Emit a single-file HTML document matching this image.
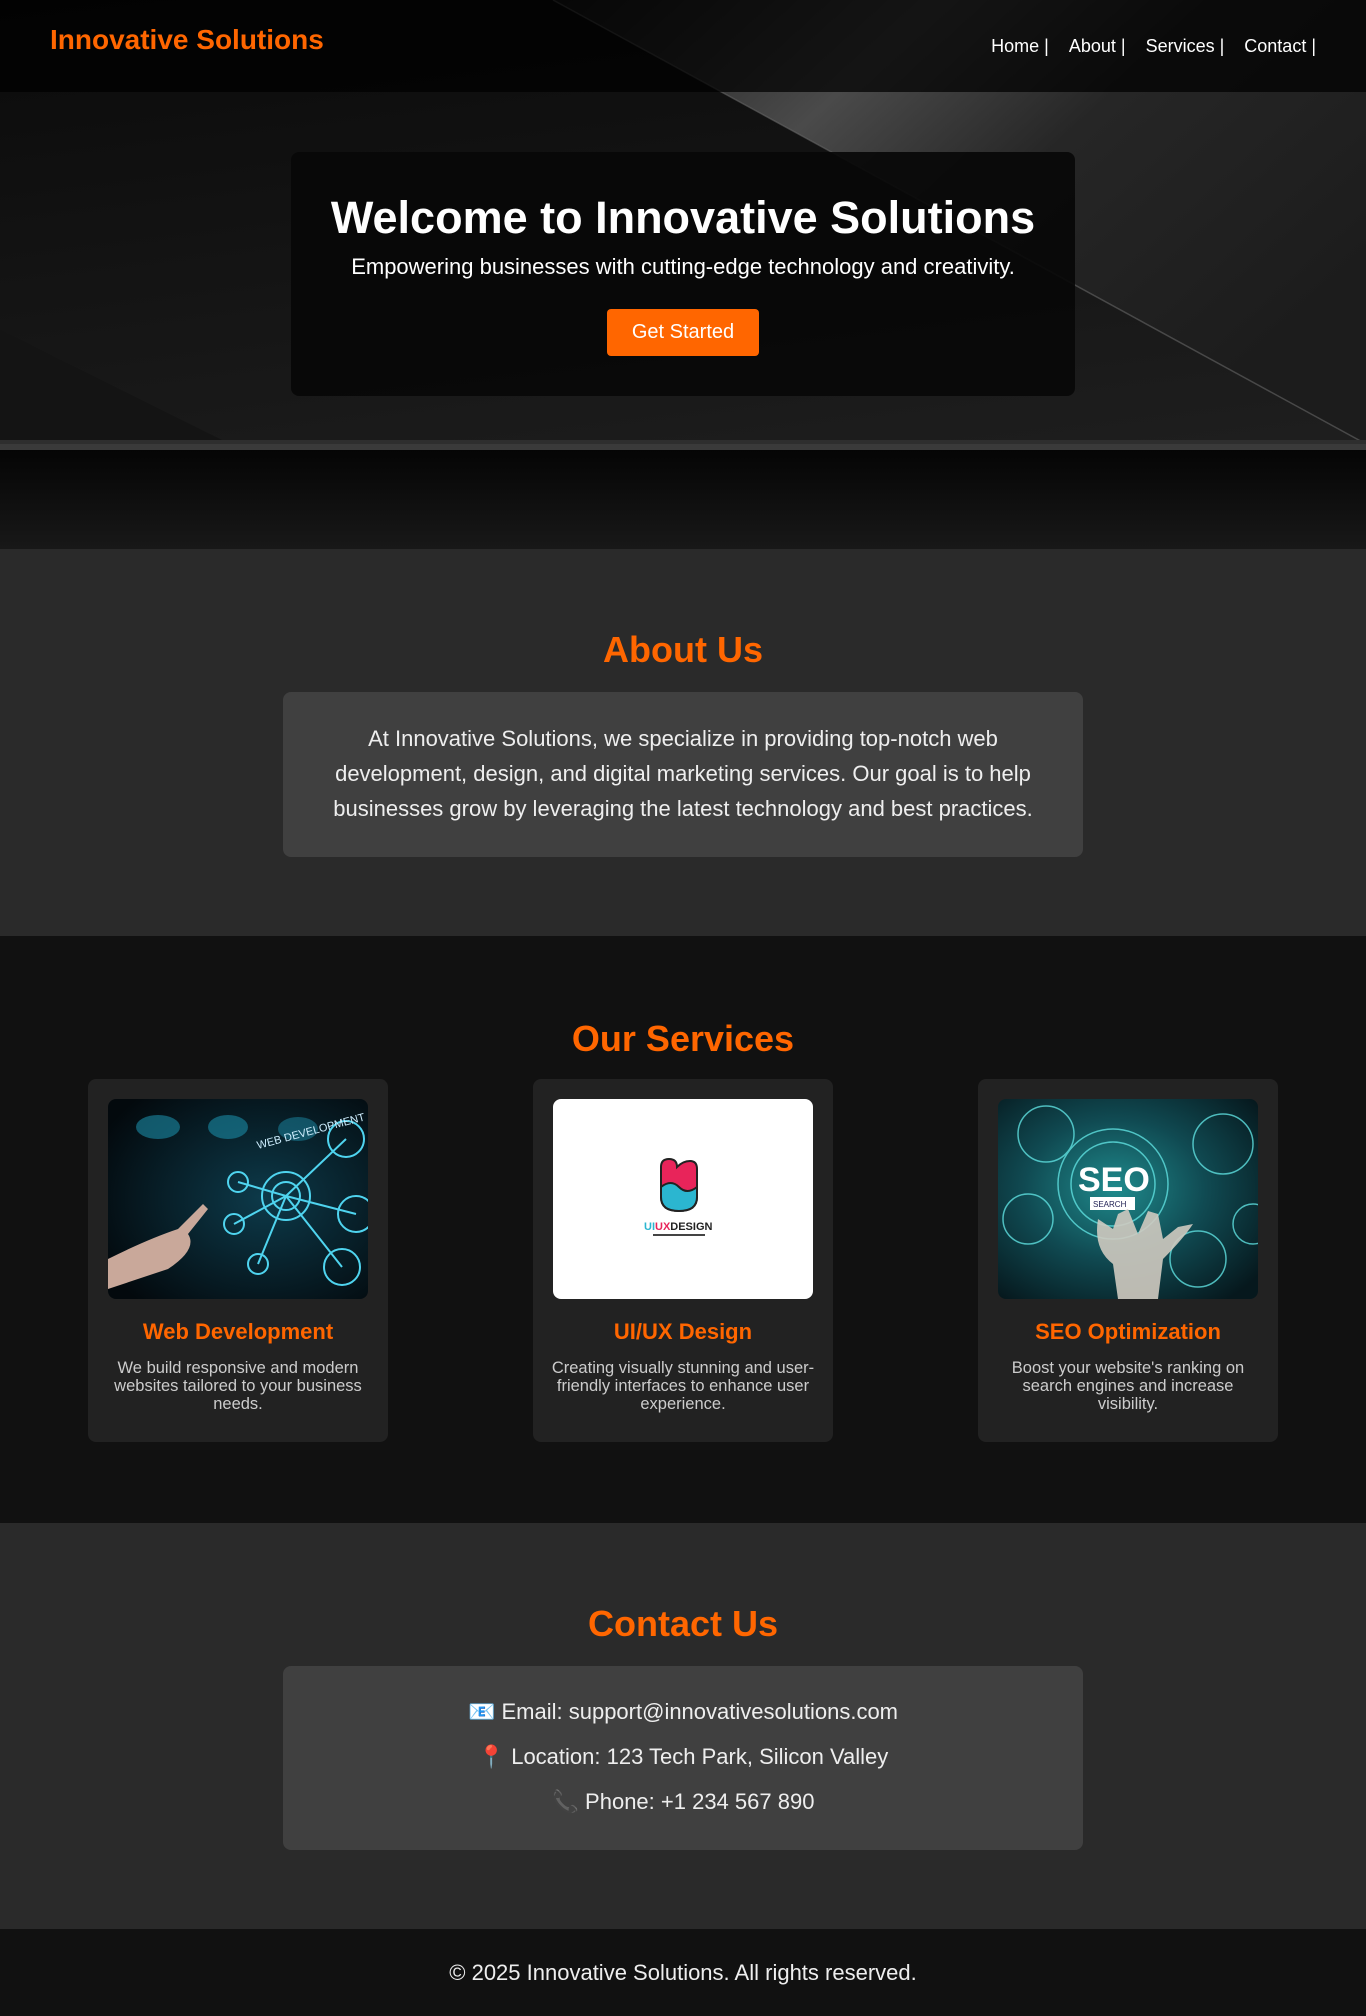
<!DOCTYPE html>
<html><head><meta charset="utf-8"><style>
*{margin:0;padding:0;box-sizing:border-box}
body{width:1366px;height:2016px;background:#111;font-family:"Liberation Sans",sans-serif;color:#fff;overflow:hidden}
header{position:absolute;top:0;left:0;width:1366px;height:92px;background:rgba(0,0,0,.72);z-index:2}
.logo{position:absolute;left:50px;top:24px;font-size:28px;font-weight:bold;color:#ff6600}
nav{position:absolute;right:50px;top:36px;font-size:18px}
nav span{margin-left:20px}
.hero{position:absolute;top:0;left:0;width:1366px;height:549px;overflow:hidden;background:#111}
.hbox{position:absolute;left:291px;top:152px;width:784px;height:244px;background:rgba(8,8,8,.92);border-radius:8px;text-align:center;z-index:1}
.hbox h1{font-size:45px;margin-top:41px;line-height:1.1}
.hbox p{font-size:22px;margin-top:11px}
.btn{display:inline-block;margin-top:29px;background:#ff6600;color:#fff;font-size:20px;width:152px;height:47px;line-height:47px;border-radius:4px}
section{position:absolute;left:0;width:1366px;text-align:center}
h2{font-size:36px;color:#ff6600;font-weight:bold}
.box{width:800px;margin:0 auto;background:#404040;border-radius:8px;color:#eee}
.about{top:549px;height:387px;background:#2a2a2a}
.about h2{margin-top:80px}
.about .box{margin-top:21px;height:165px;padding:29px 40px;font-size:22px;line-height:35px}
.services{top:936px;height:587px;background:#111}
.services h2{margin-top:82px}
.card{position:absolute;top:143px;width:300px;height:363px;background:#222;border-radius:8px}
.card svg{position:absolute;left:20px;top:20px;border-radius:8px}
.card h3{position:absolute;top:240px;width:100%;font-size:22px;color:#ff6600}
.card div{position:absolute;top:280px;left:18px;right:18px;font-size:16.5px;line-height:18px;color:#ccc}
.contact{top:1523px;height:406px;background:#2a2a2a}
.contact h2{margin-top:80px}
.contact .box{margin-top:21px;height:184px;padding-top:23px;font-size:22px;line-height:45px}
footer{position:absolute;top:1929px;left:0;width:1366px;height:87px;background:#111;text-align:center;font-size:22px;line-height:87px;color:#eee}
</style></head><body>
<div class="hero">
<svg width="1366" height="549" viewBox="0 0 1366 549" style="position:absolute;left:0;top:0">
<defs>
<linearGradient id="hl" x1="0" y1="0" x2="1" y2="0.6"><stop offset="0" stop-color="#1a1a1a"/><stop offset=".35" stop-color="#4a4a4a"/><stop offset=".6" stop-color="#262626"/><stop offset="1" stop-color="#1c1c1c"/></linearGradient>
<linearGradient id="hd" x1="0" y1="0" x2="0.3" y2="1"><stop offset="0" stop-color="#0a0a0a"/><stop offset=".6" stop-color="#161616"/><stop offset="1" stop-color="#1e1e1e"/></linearGradient>
<linearGradient id="bt" x1="0" y1="0" x2="0" y2="1"><stop offset="0" stop-color="#050505"/><stop offset="1" stop-color="#181818"/></linearGradient>
</defs>
<rect width="1366" height="549" fill="url(#hd)"/>
<polygon points="553,0 1366,0 1366,444" fill="url(#hl)"/>
<polygon points="0,330 0,444 230,444" fill="#141414"/>
<line x1="553" y1="0" x2="1366" y2="444" stroke="#666" stroke-width="1.5" opacity=".6"/>
<rect y="440" width="1366" height="4" fill="#2e2e2e"/>
<rect y="444" width="1366" height="6" fill="#3a3a3a"/>
<rect y="450" width="1366" height="99" fill="url(#bt)"/>
</svg>
<div class="hbox"><h1>Welcome to Innovative Solutions</h1><p>Empowering businesses with cutting-edge technology and creativity.</p><span class="btn">Get Started</span></div></div>
<header><div class="logo">Innovative Solutions</div><nav><span>Home |</span><span>About |</span><span>Services |</span><span>Contact |</span></nav></header>
<section class="about"><h2>About Us</h2><div class="box">At Innovative Solutions, we specialize in providing top-notch web development, design, and digital marketing services. Our goal is to help businesses grow by leveraging the latest technology and best practices.</div></section>
<section class="services"><h2>Our Services</h2>
<div class="card" style="left:88px">
<svg width="260" height="200" viewBox="0 0 260 200"><defs><radialGradient id="g1" cx=".6" cy=".5" r=".7"><stop offset="0" stop-color="#0d3a4a"/><stop offset="1" stop-color="#03090d"/></radialGradient></defs>
<rect width="260" height="200" fill="url(#g1)"/><ellipse cx="50" cy="28" rx="22" ry="12" fill="#1b8aa5" opacity=".6"/><ellipse cx="120" cy="28" rx="20" ry="12" fill="#1b8aa5" opacity=".6"/><ellipse cx="190" cy="30" rx="20" ry="12" fill="#1b8aa5" opacity=".5"/>
<g fill="none" stroke="#4fd4ef" stroke-width="2"><circle cx="178" cy="97" r="24"/><circle cx="178" cy="97" r="14"/><circle cx="238" cy="40" r="18"/><circle cx="248" cy="115" r="18"/><circle cx="234" cy="168" r="18"/><circle cx="130" cy="83" r="10"/><circle cx="126" cy="125" r="10"/><circle cx="150" cy="165" r="10"/><path d="M178 97L238 40M178 97L248 115M178 97L234 168M178 97L130 83M178 97L126 125M178 97L150 165"/></g>
<text x="150" y="50" fill="#cfefff" font-size="11" font-family="Liberation Sans" transform="rotate(-15 150 50)">WEB DEVELOPMENT</text>
<path d="M0 160 Q40 140 70 130 L95 105 L100 110 L80 135 Q90 150 60 170 L0 190Z" fill="#c9a89a"/></svg>
<h3>Web Development</h3><div>We build responsive and modern websites tailored to your business needs.</div></div>
<div class="card" style="left:533px">
<svg width="260" height="200" viewBox="0 0 260 200"><rect width="260" height="200" fill="#fff"/>
<path d="M108 68 Q108 60 116 60 Q124 60 124 68 Q130 62 137 62 Q144 62 144 70 L144 98 Q144 112 126 112 Q108 112 108 98Z" fill="#e8245a" stroke="#222" stroke-width="2"/>
<path d="M108 88 Q118 80 126 88 Q134 96 144 88 L144 98 Q144 112 126 112 Q108 112 108 98Z" fill="#2bb6d0" stroke="#222" stroke-width="2"/>
<text x="91" y="131" font-size="11" font-weight="bold" font-family="Liberation Sans" fill="#2bb6d0">UI<tspan fill="#e8245a">UX</tspan><tspan fill="#222">DESIGN</tspan></text>
<rect x="100" y="135" width="52" height="2" fill="#444"/></svg>
<h3>UI/UX Design</h3><div>Creating visually stunning and user-friendly interfaces to enhance user experience.</div></div>
<div class="card" style="left:978px">
<svg width="260" height="200" viewBox="0 0 260 200"><defs><radialGradient id="g3" cx=".45" cy=".45" r=".7"><stop offset="0" stop-color="#1f8a8c"/><stop offset=".5" stop-color="#104a52"/><stop offset="1" stop-color="#06181d"/></radialGradient></defs>
<rect width="260" height="200" fill="url(#g3)"/>
<g fill="none" stroke="#5fe0e0" stroke-width="1.5" opacity=".8"><circle cx="115" cy="85" r="55"/><circle cx="115" cy="85" r="42"/><circle cx="48" cy="35" r="28"/><circle cx="225" cy="45" r="30"/><circle cx="30" cy="120" r="25"/><circle cx="200" cy="160" r="28"/><circle cx="255" cy="125" r="20"/></g>
<text x="80" y="92" font-size="34" font-weight="bold" fill="#fff" font-family="Liberation Sans">SEO</text>
<rect x="92" y="98" width="45" height="13" fill="#fff"/><text x="95" y="108" font-size="8" fill="#225" font-family="Liberation Sans">SEARCH</text>
<path d="M100 120 Q95 150 115 165 L120 200 L160 200 L165 160 Q185 140 195 125 L180 128 L165 140 L160 115 L150 112 L140 135 L130 110 L120 115 L115 130Z" fill="#cfcac0" opacity=".9"/></svg>
<h3>SEO Optimization</h3><div>Boost your website's ranking on search engines and increase visibility.</div></div>
</section>
<section class="contact"><h2>Contact Us</h2><div class="box"><div>📧 Email: support@innovativesolutions.com</div><div>📍 Location: 123 Tech Park, Silicon Valley</div><div>📞 Phone: +1 234 567 890</div></div></section>
<footer>© 2025 Innovative Solutions. All rights reserved.</footer>
</body></html>
